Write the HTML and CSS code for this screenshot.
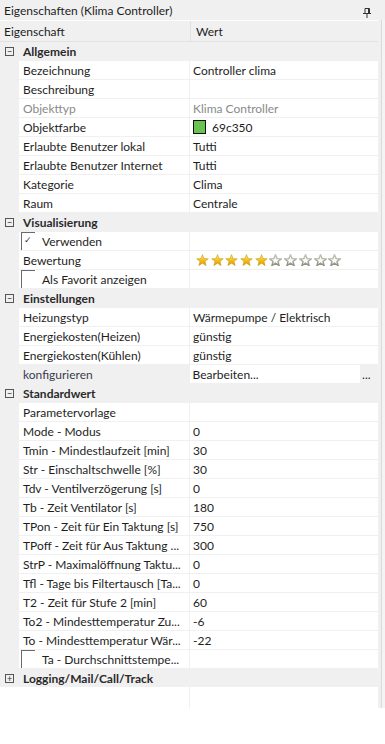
FILE: index.html
```html
<!DOCTYPE html>
<html>
<head>
<meta charset="utf-8"/>
<title>Eigenschaften</title>
<link rel="stylesheet" href="styles.css">
</head>
<body>
<svg width="0" height="0" class="defs">
	<defs>
		<linearGradient id="gold" x1="0" y1="0" x2="0" y2="1">
			<stop offset="0" stop-color="#fde98a"/>
			<stop offset="0.5" stop-color="#f4c21c"/>
			<stop offset="1" stop-color="#d99500"/>
		</linearGradient>
		<linearGradient id="grey" x1="0" y1="0" x2="0" y2="1">
			<stop offset="0" stop-color="#c9c8bd"/>
			<stop offset="1" stop-color="#8f8e82"/>
		</linearGradient>
		<path id="star" d="M6.5 0.6 L8.1 4.6 L12.3 4.8 L9.0 7.4 L10.1 11.6 L6.5 9.2 L2.9 11.6 L4.0 7.4 L0.7 4.8 L4.9 4.6 Z"/>
	</defs>
</svg>
<div class="panel">
	<div class="titlebar">
		<span>Eigenschaften (Klima Controller)</span>
		<svg class="pin" width="8" height="10" viewBox="0 0 8 10">
			<path d="M0 5.5 H8 M2 0.5 H6.5 V5.5 M2 0.5 V5.5 M5.5 0.5 V5.5 M4 5.5 V10" stroke="#333" stroke-width="1" fill="none"/>
		</svg>
	</div>
	<div class="body">
		<div class="sheet">
			<div class="head">
				<div class="hname">Eigenschaft</div>
				<div class="hval">Wert</div>
			</div>

			<div class="cat"><span class="tog">&minus;</span>Allgemein</div>
			<div class="row"><div class="name">Bezeichnung</div><div class="val">Controller clima</div></div>
			<div class="row"><div class="name">Beschreibung</div><div class="val"></div></div>
			<div class="row ro"><div class="name">Objekttyp</div><div class="val">Klima Controller</div></div>
			<div class="row"><div class="name">Objektfarbe</div><div class="val"><span class="swatch" style="background:#69c350"></span>69c350</div></div>
			<div class="row"><div class="name">Erlaubte Benutzer lokal</div><div class="val">Tutti</div></div>
			<div class="row"><div class="name">Erlaubte Benutzer Internet</div><div class="val">Tutti</div></div>
			<div class="row"><div class="name">Kategorie</div><div class="val">Clima</div></div>
			<div class="row"><div class="name">Raum</div><div class="val">Centrale</div></div>

			<div class="cat"><span class="tog">&minus;</span>Visualisierung</div>
			<div class="row"><div class="name chk"><span class="box">&#10003;</span>Verwenden</div><div class="val"></div></div>
			<div class="row"><div class="name">Bewertung</div><div class="val">
				<span class="stars">
					<svg viewBox="0 0 13 12"><use href="#star" class="on"/></svg>
					<svg viewBox="0 0 13 12"><use href="#star" class="on"/></svg>
					<svg viewBox="0 0 13 12"><use href="#star" class="on"/></svg>
					<svg viewBox="0 0 13 12"><use href="#star" class="on"/></svg>
					<svg viewBox="0 0 13 12"><use href="#star" class="on"/></svg>
					<svg viewBox="0 0 13 12"><use href="#star" class="off"/></svg>
					<svg viewBox="0 0 13 12"><use href="#star" class="off"/></svg>
					<svg viewBox="0 0 13 12"><use href="#star" class="off"/></svg>
					<svg viewBox="0 0 13 12"><use href="#star" class="off"/></svg>
					<svg viewBox="0 0 13 12"><use href="#star" class="off"/></svg>
				</span>
			</div></div>
			<div class="row"><div class="name chk"><span class="box"></span>Als Favorit anzeigen</div><div class="val"></div></div>

			<div class="cat"><span class="tog">&minus;</span>Einstellungen</div>
			<div class="row"><div class="name">Heizungstyp</div><div class="val">Wärmepumpe / Elektrisch</div></div>
			<div class="row"><div class="name">Energiekosten(Heizen)</div><div class="val">günstig</div></div>
			<div class="row"><div class="name">Energiekosten(Kühlen)</div><div class="val">günstig</div></div>
			<div class="row action"><div class="name">konfigurieren</div><div class="val">Bearbeiten...</div><div class="dots">...</div></div>

			<div class="cat"><span class="tog">&minus;</span>Standardwert</div>
			<div class="row"><div class="name">Parametervorlage</div><div class="val"></div></div>
			<div class="row"><div class="name">Mode - Modus</div><div class="val">0</div></div>
			<div class="row"><div class="name">Tmin - Mindestlaufzeit [min]</div><div class="val">30</div></div>
			<div class="row"><div class="name">Str - Einschaltschwelle [%]</div><div class="val">30</div></div>
			<div class="row"><div class="name">Tdv - Ventilverzögerung [s]</div><div class="val">0</div></div>
			<div class="row"><div class="name">Tb - Zeit Ventilator [s]</div><div class="val">180</div></div>
			<div class="row"><div class="name">TPon - Zeit für Ein Taktung [s]</div><div class="val">750</div></div>
			<div class="row"><div class="name">TPoff - Zeit für Aus Taktung ...</div><div class="val">300</div></div>
			<div class="row"><div class="name">StrP - Maximalöffnung Taktu...</div><div class="val">0</div></div>
			<div class="row"><div class="name">Tfl - Tage bis Filtertausch [Ta...</div><div class="val">0</div></div>
			<div class="row"><div class="name">T2 - Zeit für Stufe 2 [min]</div><div class="val">60</div></div>
			<div class="row"><div class="name">To2 - Mindesttemperatur Zu...</div><div class="val">-6</div></div>
			<div class="row"><div class="name">To - Mindesttemperatur Wär...</div><div class="val">-22</div></div>
			<div class="row"><div class="name chk"><span class="box"></span>Ta - Durchschnittstempe...</div><div class="val"></div></div>

			<div class="cat"><span class="tog">+</span>Logging/Mail/Call/Track</div>
			<div class="filler"><div class="fl"></div><div class="fr"></div></div>
		</div>
		<div class="vscroll"></div>
	</div>
</div>
</body>
</html>
```

FILE: styles.css
```css
body {
	margin: 0;
	background: #ffffff;
	font-family: Lato, "Liberation Sans", sans-serif;
	font-size: 12px;
	color: #1e1e1e;
}
.defs {
	position: absolute;
}
.panel {
	width: 385px;
	background: #f0f0f0;
}
.titlebar {
	height: 20px;
	line-height: 22px;
	padding-left: 4px;
	display: flex;
	align-items: flex-start;
	justify-content: space-between;
	border-bottom: 1px solid #fdfdfd;
	margin-right: 7px;
}
.pin {
	margin-right: 7px;
	margin-top: 8px;
}
.body {
	display: flex;
}
.sheet {
	width: 378px;
}
.vscroll {
	width: 3px;
	margin-left: 3px;
	border-left: 1px solid #dadada;
	background: #f4f4f4;
	margin-top: -1px;
}
.head {
	display: flex;
	height: 20px;
	line-height: 21px;
	border-bottom: 1px solid #e2e2e2;
}
.hname {
	width: 186px;
	padding-left: 4px;
	border-right: 1px solid #e2e2e2;
}
.hval {
	padding-left: 5px;
}
.cat {
	height: 18px;
	line-height: 20px;
	margin-bottom: 1px;
	display: flex;
	align-items: flex-start;
	font-weight: bold;
	color: #2a2a2a;
}
.tog {
	width: 7px;
	height: 7px;
	border: 1px solid #555;
	margin: 5px 9px 0 5px;
	display: flex;
	align-items: center;
	justify-content: center;
	font-size: 9px;
	font-weight: normal;
	line-height: 7px;
	color: #333;
}
.row {
	display: flex;
	height: 18px;
	line-height: 20px;
	margin-bottom: 1px;
}
.name {
	margin-left: 19px;
	width: 166px;
	padding-left: 4px;
	background: #ffffff;
	white-space: nowrap;
	overflow: hidden;
}
.val {
	margin-left: 1px;
	width: 185px;
	padding-left: 3px;
	background: #ffffff;
	display: flex;
	align-items: flex-start;
	white-space: nowrap;
}
.ro {
	color: #8a8a8a;
}
.action .name {
	background: transparent;
	color: #3b3b4f;
}
.action .val {
	width: 168px;
}
.dots {
	width: 16px;
	padding-left: 2px;
}
.swatch {
	width: 11px;
	height: 12px;
	border: 1px solid #111;
	margin: 2px 6px 0 0;
}
.chk {
	display: flex;
	padding-left: 2px;
	width: 168px;
}
.box {
	width: 13px;
	height: 17px;
	border-top: 1px solid #6a6a6a;
	border-left: 1px solid #6a6a6a;
	margin-right: 7px;
	font-size: 9px;
	line-height: 14px;
	text-indent: 2px;
	color: #333;
}
.stars {
	display: flex;
	gap: 1.7px;
	margin: 3px 0 0 3px;
}
.stars svg {
	width: 13px;
	height: 12px;
}
.on {
	fill: url(#gold);
	stroke: #c98c00;
	stroke-width: 0.5;
}
.off {
	fill: #fbfbf8;
	stroke: url(#grey);
	stroke-width: 1.4;
}
.filler {
	display: flex;
	height: 21px;
	margin-top: -1px;
	background: #ffffff;
}
.fl {
	width: 189px;
	border-right: 1px solid #f0f0f0;
}
```
